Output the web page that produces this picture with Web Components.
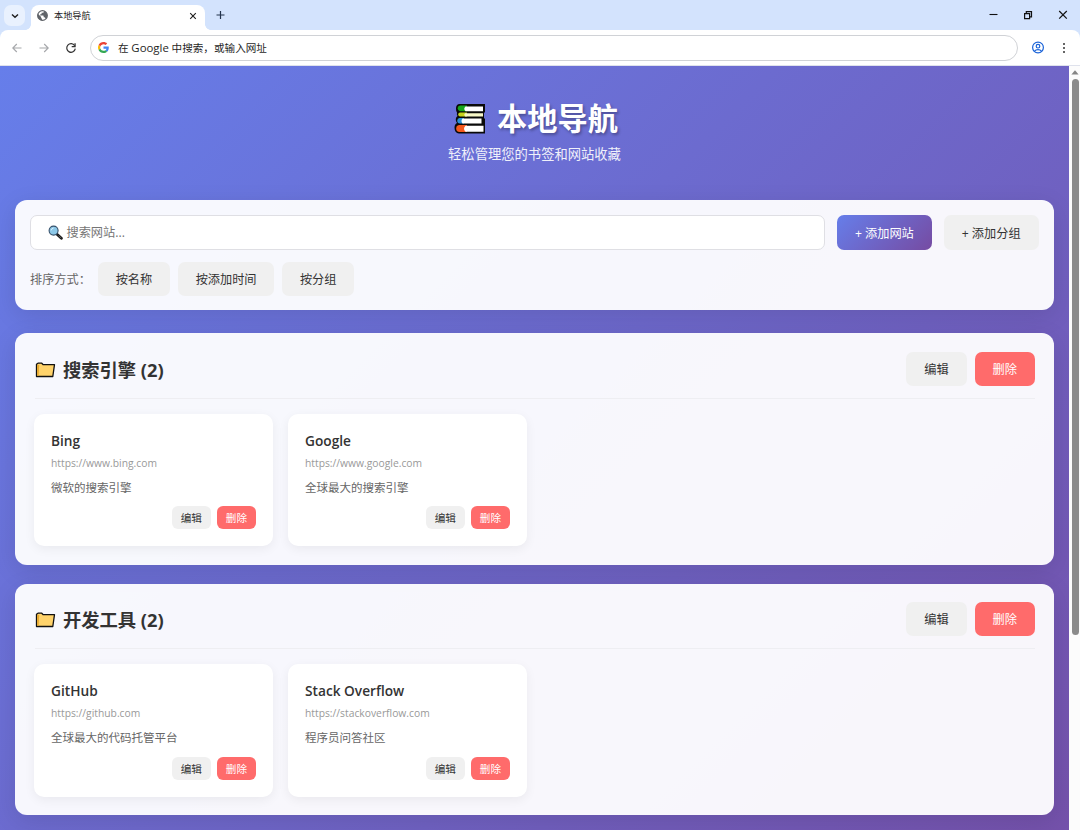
<!DOCTYPE html>
<html lang="zh-CN">
<head>
<meta charset="UTF-8">
<title>本地导航</title>
<style>
  html, body {
    margin: 0;
    height: 830px;
    overflow: hidden;
  }

  body {
    font-family: "Open Sans", "Noto Sans CJK SC", sans-serif;
    color: #333;
  }
</style>
</head>
<body>
<browser-window>
  <browser-tabs slot="tabs" label="本地导航"></browser-tabs>
  <browser-toolbar slot="toolbar">在 <span>Google</span> 中搜索，或输入网址</browser-toolbar>
  <nav-header heading="本地导航">轻松管理您的书签和网站收藏</nav-header>
  <search-panel>
    <nav-button slot="actions" kind="primary">+ 添加网站</nav-button>
    <nav-button slot="actions">+ 添加分组</nav-button>
    <nav-button slot="sort">按名称</nav-button>
    <nav-button slot="sort">按添加时间</nav-button>
    <nav-button slot="sort">按分组</nav-button>
  </search-panel>
  <site-group heading="搜索引擎 (2)">
    <site-card name="Bing" url="https://www.bing.com">微软的搜索引擎</site-card>
    <site-card name="Google" url="https://www.google.com">全球最大的搜索引擎</site-card>
  </site-group>
  <site-group heading="开发工具 (2)">
    <site-card name="GitHub" url="https://github.com">全球最大的代码托管平台</site-card>
    <site-card name="Stack Overflow" url="https://stackoverflow.com">程序员问答社区</site-card>
  </site-group>
</browser-window>

<script>
/** Base class: renders its template once into an open shadow root. */
class BaseElement extends HTMLElement {
  constructor() {
    super();
    this.attachShadow({ mode: 'open' });
  }

  connectedCallback() {
    this.shadowRoot.innerHTML = this.template();
  }

  attr(name) {
    return this.getAttribute(name) || '';
  }
}

/** Window frame: tab strip, toolbar, page viewport and scrollbar. */
class BrowserWindow extends BaseElement {
  template() {
    return `
      <style>
        :host {
          display: flex;
          flex-direction: column;
          height: 830px;
          background: #d3e3fd;
        }

        .viewport {
          flex: 1;
          display: flex;
          min-height: 0;
        }

        .page {
          flex: 1;
          box-sizing: border-box;
          padding: 0 15px;
          overflow: hidden;
          background: linear-gradient(135deg, #667eea 0%, #764ba2 100%) 0 0 / 100% 1014px no-repeat;
        }

        .scrollbar {
          width: 11px;
          box-sizing: border-box;
          padding: 4px 0 0 1px;
          background: #fcfcfc;
          display: flex;
          flex-direction: column;
          align-items: center;
        }

        .thumb {
          width: 7px;
          height: 556px;
          margin-top: 4px;
          border-radius: 4px;
          background: #8b8b8b;
        }
      </style>
      <slot name="tabs"></slot>
      <slot name="toolbar"></slot>
      <div class="viewport">
        <div class="page"><slot></slot></div>
        <div class="scrollbar">
          <svg width="8" height="5" viewBox="0 0 8 5"><path d="M4 0.3 7.6 4.6H0.4Z" fill="#858585"/></svg>
          <div class="thumb"></div>
        </div>
      </div>
    `;
  }
}

class BrowserTabs extends BaseElement {
  template() {
    return `
      <style>
        :host {
          display: flex;
          height: 30px;
          color: #1f1f1f;
        }

        .list {
          width: 21px;
          height: 21px;
          margin: 5px 0 0 4px;
          border-radius: 7px;
          background: #e9f1fe;
          display: grid;
          place-items: center;
        }

        .foot {
          width: 6px;
          height: 6px;
          align-self: flex-end;
          background: radial-gradient(circle at 0 0, transparent 5.6px, #fff 6.2px);
        }

        .foot.right {
          background: radial-gradient(circle at 100% 0, transparent 5.6px, #fff 6.2px);
        }

        .tab {
          box-sizing: border-box;
          width: 174px;
          height: 25px;
          margin-top: 5px;
          padding: 0 8px 4px 6px;
          border-radius: 8px 8px 0 0;
          background: #fff;
          display: flex;
          align-items: center;
        }

        .label {
          flex: 1;
          padding-left: 6px;
          font-size: 9.2px;
          line-height: 14px;
        }

        .add {
          margin: 10px 0 0 4px;
        }

        .controls {
          margin: 9px 11px 0 auto;
          display: flex;
          gap: 23px;
        }

        svg {
          display: block;
        }
      </style>
      <div class="list">
        <svg width="8" height="6" viewBox="0 0 8 6" fill="none" stroke="#1f1f1f" stroke-width="1.4"><path d="M1 1.4 4 4.3 7 1.4"/></svg>
      </div>
      <span class="foot"></span>
      <div class="tab">
        <svg width="11" height="11" viewBox="0 0 24 24">
          <circle cx="12" cy="12" r="10.5" fill="#fff" stroke="#5f6368" stroke-width="2.6"/>
          <path fill="#5f6368" d="M2 8 9 15v2c0 1 1 2 2 2v4C5 22 1 17 1 12c0-1.5.4-3 1-4Zm13-6.4V3c0 1.7-1 3-3 3H10v2c0 .9-.8 1.5-1.7 1.5H7V12h6.3c.7 0 1.2.5 1.2 1.2V16h1.3c1.1 0 2 .7 2.3 1.7L20 19.5C24 15 24 5 15 1.6Z"/>
        </svg>
        <span class="label">${this.attr('label')}</span>
        <svg width="8" height="8" viewBox="0 0 8 8" stroke="#1f1f1f" stroke-width="1.1"><path d="M1.2 1.2l5.6 5.6M6.8 1.2 1.2 6.8"/></svg>
      </div>
      <span class="foot right"></span>
      <svg class="add" width="10" height="10" viewBox="0 0 10 10" stroke="#24344d" stroke-width="1.2"><path d="M5.5 1v8M1.5 5h8"/></svg>
      <div class="controls">
        <svg width="12" height="12" viewBox="0 0 12 12" stroke="#111" stroke-width="1.1"><path d="M2.5 5.5h8"/></svg>
        <svg width="12" height="12" viewBox="0 0 12 12" fill="none" stroke="#111" stroke-width="1.2"><path d="M2.6 4.6h5v5h-5zM4.3 4.4V2.6h5.2v5.2H7.8"/></svg>
        <svg width="12" height="12" viewBox="0 0 12 12" stroke="#111" stroke-width="1.2"><path d="M2.2 2l7.6 7.6M9.8 2 2.2 9.6"/></svg>
      </div>
    `;
  }
}

class BrowserToolbar extends BaseElement {
  template() {
    return `
      <style>
        :host {
          display: flex;
          align-items: center;
          box-sizing: border-box;
          height: 36px;
          padding: 0 11px;
          border-bottom: 1px solid #dfe2ec;
          border-radius: 8px 8px 0 0;
          background: #fff;
        }

        .nav {
          display: flex;
          gap: 15px;
        }

        .omnibox {
          flex: 1;
          box-sizing: border-box;
          height: 26px;
          margin: 0 14px 0 13px;
          padding-left: 7px;
          border: 1px solid #d0d2d6;
          border-radius: 13px;
          display: flex;
          align-items: center;
          gap: 9px;
          color: #1f1f1f;
          font-size: 10.6px;
          line-height: 16px;
        }

        ::slotted(span) {
          font-size: 11.4px;
        }

        .menu {
          margin-left: 17.5px;
        }

        svg {
          display: block;
        }
      </style>
      <div class="nav">
        <svg width="12" height="12" viewBox="0 0 12 12" fill="none" stroke="#a5a7aa" stroke-width="1.1"><path d="M10.5 6H1.8M5.8 2 1.8 6l4 4"/></svg>
        <svg width="12" height="12" viewBox="0 0 12 12" fill="none" stroke="#a5a7aa" stroke-width="1.1"><path d="M1.5 6h8.7M6.2 2l4 4-4 4"/></svg>
        <svg width="12" height="12" viewBox="0 0 12 12" fill="none" stroke="#333" stroke-width="1.2"><path d="M9.7 3.7A4.3 4.3 0 1 0 10.3 6.7"/><path fill="#333" stroke="none" d="M10.7 1.3v4H6.7v-1.2h2.7V1.3z"/></svg>
      </div>
      <div class="omnibox">
        <svg width="11" height="11" viewBox="0 0 48 48">
          <path fill="#EA4335" d="M24 9.500c3.540 0 6.710 1.220 9.210 3.600l6.850-6.850C35.900 2.380 30.470 0 24 0 14.620 0 6.510 5.380 2.560 13.220l7.980 6.190C12.430 13.720 17.740 9.500 24 9.500z"/>
          <path fill="#4285F4" d="M46.980 24.550c0-1.570-.15-3.090-.38-4.550H24v9.020h12.940c-.58 2.960-2.260 5.480-4.780 7.180l7.730 6c4.510-4.180 7.090-10.360 7.090-17.650z"/>
          <path fill="#FBBC05" d="M10.530 28.590c-.48-1.450-.76-2.990-.76-4.590s.27-3.140.76-4.590l-7.980-6.190C.92 16.460 0 20.120 0 24c0 3.880.92 7.540 2.560 10.780l7.970-6.190z"/>
          <path fill="#34A853" d="M24 48c6.480 0 11.930-2.130 15.890-5.810l-7.730-6c-2.150 1.450-4.920 2.300-8.160 2.300-6.260 0-11.570-4.220-13.470-9.910l-7.980 6.190C6.510 42.620 14.620 48 24 48z"/>
        </svg>
        <div><slot></slot></div>
      </div>
      <svg width="12" height="13" viewBox="0 0 12 13" fill="none" stroke="#1a63d8" stroke-width="1.2"><circle cx="6" cy="6.5" r="5.4"/><circle cx="6" cy="5.2" r="1.8"/><path d="M2.3 10.3c2-2.2 5.400-2.200 7.400 0"/></svg>
      <svg class="menu" width="8" height="12" viewBox="0 0 8 12" fill="#333"><circle cx="3" cy="2" r="1"/><circle cx="3" cy="6" r="1"/><circle cx="3" cy="10" r="1"/></svg>
    `;
  }
}

class NavHeader extends BaseElement {
  template() {
    return `
      <style>
        :host {
          display: flex;
          flex-direction: column;
          align-items: center;
          box-sizing: border-box;
          height: 134px;
          padding-top: 30px;
          color: #fff;
        }

        h1 {
          margin: 0;
          height: 46px;
          display: flex;
          align-items: center;
          gap: 10.5px;
          padding-left: 1.5px;
          font-size: 30.2px;
          line-height: 46px;
          font-weight: 700;
          text-shadow: 1.5px 1.5px 3px rgba(0, 0, 0, 0.3);
        }

        svg {
          display: block;
        }

        p {
          margin: 2px 0 0;
          font-size: 13.3px;
          line-height: 20px;
          opacity: 0.9;
        }
      </style>
      <h1>
        <svg width="34" height="34" viewBox="0 0 34 34">
          <path fill="#0a0a0a" d="M6 2H32V10.5H31V16.5H32V31.5H6Q1.5 31 1.5 25.5Q1.5 22 4 21Q2.5 19.5 2.8 17Q3 15 4.5 14Q3.5 12.5 4 10.5Q3 10 3 6.5Q3 2.5 6 2Z"/>
          <path fill="#16a51b" d="M7.5 3.5H14V9.3H7Q4.7 9 4.7 6.3Q4.8 3.6 7.5 3.5Z"/>
          <path fill="#fff" d="M12.500 4.500H30V9.300H12.500Q10 6.800 12.500 4.500Z"/>
          <path fill="#c7d51b" d="M7 10.500H14v4H7.200Q5.200 14.300 5.200 12.400Q5.300 10.700 7 10.500Z"/>
          <path fill="#f7f8c8" d="M12 11.200H30V14.500H12Q10.500 12.700 12 11.200Z"/>
          <path fill="#2a91db" d="M6.500 16H11v5.500H7Q4.200 21.200 4.200 18.700Q4.300 16.300 6.500 16Z"/>
          <path fill="#fff" d="M9.500 16.500H28.500V21.500H9.500Q7.500 18.800 9.500 16.500Z"/>
          <path fill="#f4591d" d="M6 23H14V30H6.500Q3.200 29.700 3.200 26.400Q3.300 23.500 6 23Z"/>
          <path fill="#fff" d="M12.500 23.700H30.500V29.700H12.500Q9.500 26.800 12.500 23.700Z"/>
        </svg>
        <span>${this.attr('heading')}</span>
      </h1>
      <p><slot></slot></p>
    `;
  }
}

/** Button. kind: primary | danger, size: small */
class NavButton extends BaseElement {
  template() {
    return `
      <style>
        :host {
          display: block;
          box-sizing: border-box;
          flex: none;
          height: 34px;
          padding: 0 17.7px;
          border-radius: 7px;
          background: #f0f0f0;
          color: #333;
          font-size: 12.2px;
          line-height: 36px;
          white-space: nowrap;
          cursor: pointer;
        }

        :host([kind="primary"]) {
          background: linear-gradient(135deg, #667eea 0%, #764ba2 100%);
          color: #fff;
        }

        :host([kind="danger"]) {
          background: #ff6b6b;
          color: #fff;
        }

        :host([size="small"]) {
          height: 23px;
          padding: 0 9px;
          border-radius: 6px;
          font-size: 10.6px;
          line-height: 24px;
        }
      </style>
      <slot></slot>
    `;
  }
}

class SearchPanel extends BaseElement {
  template() {
    return `
      <style>
        :host {
          display: block;
          box-sizing: border-box;
          height: 110px;
          margin-bottom: 23px;
          padding: 15px 15px 0;
          border-radius: 12px;
          background: rgba(255, 255, 255, 0.95);
          box-shadow: 0 6px 24px rgba(0, 0, 0, 0.1);
        }

        .row {
          display: flex;
          gap: 11.5px;
        }

        .search {
          flex: 1;
          box-sizing: border-box;
          height: 35px;
          padding-left: 16.5px;
          border: 1.5px solid #dfdfe4;
          border-radius: 7px;
          background: #fff;
          display: flex;
          align-items: center;
          gap: 4px;
          color: #757575;
          font-size: 12.2px;
          line-height: 32px;
        }

        ::slotted([slot="actions"]) {
          width: 95.3px;
          height: 35px;
          padding-left: 18px;
          line-height: 38px;
        }

        .sort {
          margin-top: 12px;
          gap: 8px;
          align-items: center;
        }

        .label {
          width: 60px;
          color: #666;
          font-size: 12.2px;
          line-height: 36px;
          height: 34px;
          white-space: nowrap;
        }
      </style>
      <div class="row">
        <div class="search">
          <svg width="15" height="15" viewBox="0 0 15 15">
            <path d="M9 9.3 13.4 13.3" stroke="#1c1c1c" stroke-width="2.8" stroke-linecap="round"/>
            <path d="M10.5 10.6 13.1 13" stroke="#555" stroke-width="1"/>
            <circle cx="5.6" cy="5.6" r="4.5" fill="#8cc8e8" stroke="#35506a" stroke-width="1.1"/>
            <path d="M3.2 5.4Q3.5 3.3 5.6 3" fill="none" stroke="#d8f0fb" stroke-width="1"/>
          </svg>
          <span>搜索网站...</span>
        </div>
        <slot name="actions"></slot>
      </div>
      <div class="row sort">
        <span class="label">排序方式：</span>
        <slot name="sort"></slot>
      </div>
    `;
  }
}

class SiteGroup extends BaseElement {
  template() {
    return `
      <style>
        :host {
          display: block;
          box-sizing: border-box;
          height: 231.8px;
          margin-bottom: 18.8px;
          padding: 18.5px 19px 0;
          border-radius: 12px;
          background: rgba(255, 255, 255, 0.95);
          box-shadow: 0 6px 24px rgba(0, 0, 0, 0.1);
        }

        header {
          box-sizing: border-box;
          height: 47px;
          margin-left: 1px;
          border-bottom: 1.5px solid #eeeef2;
          display: flex;
          align-items: flex-start;
          gap: 8px;
        }

        nav-button {
          width: 60.4px;
          padding: 0 18px;
        }

        h2 {
          flex: 1;
          margin: 0;
          display: flex;
          align-items: center;
          gap: 7px;
          font-size: 18.3px;
          line-height: 36px;
          font-weight: 700;
        }

        .cards {
          display: grid;
          grid-template-columns: repeat(4, 1fr);
          gap: 15px;
          margin-top: 15px;
        }
      </style>
      <header>
        <h2>
          <svg width="21" height="16" viewBox="0 0 21 16">
            <path d="M1.5 14.5V2.3L3 1.2H6.8L8.2 2.7H19.5L17.8 14.5Z" fill="#ffd36b" stroke="#111" stroke-width="1.3" stroke-linejoin="round"/>
            <path d="M2.2 13.8V3H4.2L3.6 13.8Z" fill="#e8a92c"/>
          </svg>
          <span>${this.attr('heading')}</span>
        </h2>
        <nav-button>编辑</nav-button>
        <nav-button kind="danger">删除</nav-button>
      </header>
      <div class="cards"><slot></slot></div>
    `;
  }
}

class SiteCard extends BaseElement {
  template() {
    return `
      <style>
        :host {
          display: block;
          box-sizing: border-box;
          height: 132.5px;
          padding: 16.3px 17px 0;
          border-radius: 10px;
          background: #fff;
          box-shadow: 0 3px 11px rgba(0, 0, 0, 0.06);
        }

        h3 {
          margin: 0;
          font-size: 13.7px;
          line-height: 21px;
          font-weight: 600;
        }

        .url {
          margin-top: 3px;
          color: #999;
          font-size: 10.3px;
          line-height: 18px;
        }

        .desc {
          margin-top: 6px;
          color: #666;
          font-size: 11.5px;
          line-height: 19px;
        }

        .actions {
          display: flex;
          justify-content: flex-end;
          gap: 6px;
          margin-top: 9.7px;
        }
      </style>
      <h3>${this.attr('name')}</h3>
      <div class="url">${this.attr('url')}</div>
      <div class="desc"><slot></slot></div>
      <div class="actions">
        <nav-button size="small">编辑</nav-button>
        <nav-button size="small" kind="danger">删除</nav-button>
      </div>
    `;
  }
}

customElements.define('browser-window', BrowserWindow);
customElements.define('browser-tabs', BrowserTabs);
customElements.define('browser-toolbar', BrowserToolbar);
customElements.define('nav-header', NavHeader);
customElements.define('nav-button', NavButton);
customElements.define('search-panel', SearchPanel);
customElements.define('site-group', SiteGroup);
customElements.define('site-card', SiteCard);
</script>
</body>
</html>
